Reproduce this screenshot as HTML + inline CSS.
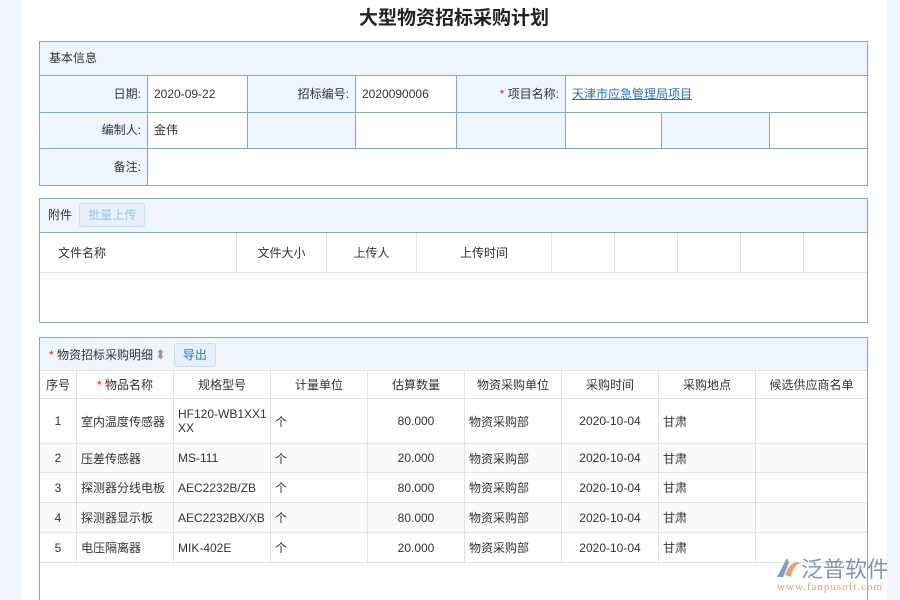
<!DOCTYPE html>
<html><head><meta charset="utf-8"><style>
*{margin:0;padding:0;box-sizing:border-box}
html,body{width:900px;height:600px;overflow:hidden}
body{background:#f0f5fc;font-family:"Liberation Sans","Noto Sans CJK SC",sans-serif;font-size:12px;color:#333;position:relative}
#main{position:absolute;left:21px;top:0;width:866px;height:600px;background:#fff;overflow:hidden}
.a{position:absolute}
.t{position:absolute;left:0;width:866px;text-align:center;top:3px;font-size:19px;font-weight:bold;color:#222}
.box{position:absolute;border:1px solid #87a9bd;background:#fff;overflow:hidden}
.hd{position:absolute;left:0;top:0;right:0;background:#eff5fd;border-bottom:1px solid #87a9bd;height:34px;line-height:33px;padding-left:9px}
.c{position:absolute;border-right:1px solid #87a9bd;border-bottom:1px solid #87a9bd;line-height:37px;padding:0 6px}
.lb{background:#eff5fd;text-align:right}
.g{position:absolute;border-right:1px solid #e2e2e2;border-bottom:1px solid #e2e2e2;text-align:center;display:flex;align-items:center;justify-content:center}
.l{justify-content:flex-start;padding-left:4px;text-align:left}
.r{color:#e02020}
.btn{display:inline-block;border:1px solid #c9def0;background:#e6f1fb;border-radius:3px;padding:0 8px;line-height:22px;color:#2f73b3}
</style></head><body><div id="main">
<div class="t">大型物资招标采购计划</div>

<div class="box" style="left:18px;top:41px;width:829px;height:145px">
<div class="hd">基本信息</div>
<div class="c lb" style="left:0;top:34px;width:108px;height:37px">日期:</div>
<div class="c" style="left:108px;top:34px;width:100px;height:37px">2020-09-22</div>
<div class="c lb" style="left:208px;top:34px;width:108px;height:37px">招标编号:</div>
<div class="c" style="left:316px;top:34px;width:101px;height:37px">2020090006</div>
<div class="c lb" style="left:417px;top:34px;width:109px;height:37px"><span class="r">*</span> 项目名称:</div>
<div class="c" style="left:526px;top:34px;width:302px;height:37px;border-right:none"><span style="color:#2a6fae;text-decoration:underline">天津市应急管理局项目</span></div>
<div class="c lb" style="left:0;top:71px;width:108px;height:36px;line-height:35px">编制人:</div>
<div class="c" style="left:108px;top:71px;width:100px;height:36px;line-height:35px">金伟</div>
<div class="c lb" style="left:208px;top:71px;width:108px;height:36px"></div>
<div class="c" style="left:316px;top:71px;width:101px;height:36px"></div>
<div class="c lb" style="left:417px;top:71px;width:109px;height:36px"></div>
<div class="c" style="left:526px;top:71px;width:96px;height:36px"></div>
<div class="c lb" style="left:622px;top:71px;width:108px;height:36px"></div>
<div class="c" style="left:730px;top:71px;width:98px;height:36px;border-right:none"></div>
<div class="c lb" style="left:0;top:107px;width:108px;height:37px;border-bottom:none">备注:</div>
</div>

<div class="box" style="left:18px;top:198px;width:829px;height:125px">
<div class="hd" style="padding-left:8px">附件 <span class="btn" style="color:#9cc3e3;margin-left:4px">批量上传</span></div>
<div class="g l" style="left:0;top:34px;width:197px;height:40px;padding-left:18px">文件名称</div>
<div class="g" style="left:197px;top:34px;width:90px;height:40px">文件大小</div>
<div class="g" style="left:287px;top:34px;width:90px;height:40px">上传人</div>
<div class="g" style="left:377px;top:34px;width:135px;height:40px">上传时间</div>
<div class="g" style="left:512px;top:34px;width:63px;height:40px"></div>
<div class="g" style="left:575px;top:34px;width:63px;height:40px"></div>
<div class="g" style="left:638px;top:34px;width:63px;height:40px"></div>
<div class="g" style="left:701px;top:34px;width:63px;height:40px"></div>
<div class="g" style="left:764px;top:34px;width:64px;height:40px;border-right:none"></div>
</div>

<div class="box" style="left:18px;top:337px;width:829px;height:270px">
<div class="hd" style="height:33px;padding-left:9px;border-bottom:1px solid #e2e2e2"><span class="r">*</span> 物资招标采购明细<span style="color:#999;font-size:13px;margin:0 8px 0 2px">⬍</span><span class="btn">导出</span></div>
<div id="tb"></div>
</div>

<div class="a" style="left:752px;top:553px;width:120px;height:45px">
<svg width="30" height="26" style="position:absolute;left:0;top:2px" viewBox="0 0 30 26"><path d="M4 22 L14 3 L16 8 L10 22Z" fill="#8c9cb8"/><path d="M12 20 Q18 4 28 8 Q20 10 18 22Z" fill="#e8a07a"/></svg>
<div class="a" style="left:28px;top:-1px;font-size:22px;color:#8594b0;white-space:nowrap">泛普软件</div>
<div class="a" style="left:4px;top:28px;font-size:11px;color:#e0a080;font-family:'Liberation Serif',serif;letter-spacing:1px;white-space:nowrap">www.fanpusoft.com</div>
</div>
</div>
<script>
var cols=[0,37,134,231,328,425,522,619,716,827];
var rows=[33,61,106,135,165,195,225];
var hdr=['序号','<span class="r">*</span>&nbsp;物品名称','规格型号','计量单位','估算数量','物资采购单位','采购时间','采购地点','候选供应商名单'];
var d=[['1','室内温度传感器','HF120-WB1XX1<br>XX','个','80.000','物资采购部','2020-10-04','甘肃',''],
['2','压差传感器','MS-111','个','20.000','物资采购部','2020-10-04','甘肃',''],
['3','探测器分线电板','AEC2232B/ZB','个','80.000','物资采购部','2020-10-04','甘肃',''],
['4','探测器显示板','AEC2232BX/XB','个','80.000','物资采购部','2020-10-04','甘肃',''],
['5','电压隔离器','MIK-402E','个','20.000','物资采购部','2020-10-04','甘肃','']];
var h='';
var al=[0,1,1,1,0,1,0,1,0];
for(var r=0;r<6;r++){for(var c=0;c<9;c++){
var txt=r==0?hdr[c]:d[r-1][c];var cls='g'+(r>0&&al[c]?' l':'');
var bg=(r%2==0&&r>0)?'background:#fafafa;':'';
h+='<div class="'+cls+'" style="'+bg+'left:'+cols[c]+'px;top:'+rows[r]+'px;width:'+(cols[c+1]-cols[c])+'px;height:'+(rows[r+1]-rows[r])+'px;'+(c==8?'border-right:none;':'')+'">'+txt+'</div>';}}
document.getElementById('tb').outerHTML=h;
</script>
</body></html>
